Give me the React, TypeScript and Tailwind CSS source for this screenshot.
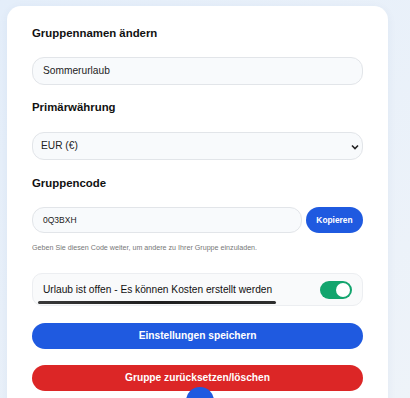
import React from "react";

const font = { fontFamily: '"Liberation Sans", Arial, sans-serif' };

export default function App() {
  return (
    <div
      className="relative h-[398px] w-[410px] overflow-hidden bg-gradient-to-br from-[#e4eefa] to-[#eef3f9] pl-[7px] pr-[22px] pt-[6px]"
      style={font}
    >
      <div className="rounded-[14px] bg-white px-[25px] pb-6 pt-[19px] shadow-[0_2px_10px_rgba(30,60,120,0.06)]">
        {/* Gruppenname */}
        <h2 className="text-[11.4px] font-bold leading-[16px] text-[#111]">Gruppennamen ändern</h2>
        <div className="mt-[16px] flex h-[28px] items-center rounded-[12px] border border-[#e2e5e9] bg-[#f8fafc] px-[10px] text-[10.2px] text-[#222]">
          Sommerurlaub
        </div>

        {/* Währung */}
        <h2 className="mt-[14px] text-[11.4px] font-bold leading-[16px] text-[#111]">Primärwährung</h2>
        <div className="mt-[17px] flex h-[28px] items-center justify-between rounded-[12px] border border-[#e2e5e9] bg-[#f8fafc] pl-[8px] pr-[3px] text-[10.2px] text-[#222]">
          <span>EUR (€)</span>
          <svg width="8" height="6" viewBox="0 0 8 6" className="mt-[1px]">
            <path d="M1 1.5 L4 4.5 L7 1.5" fill="none" stroke="#222" strokeWidth="1.6" />
          </svg>
        </div>

        {/* Gruppencode */}
        <h2 className="mt-[15px] text-[11.4px] font-bold leading-[16px] text-[#111]">Gruppencode</h2>
        <div className="mt-[16px] flex h-[26px] gap-[4px]">
          <div className="flex flex-1 items-center rounded-[12px] border border-[#e2e5e9] bg-[#f8fafc] px-[10px] text-[8.5px] text-[#222]">
            0Q3BXH
          </div>
          <button className="h-[26px] w-[57px] rounded-full bg-[#1f5ae0] text-[8.4px] font-bold text-white">
            Kopieren
          </button>
        </div>
        <p className="mt-[10px] text-[7.15px] leading-[10px] text-[#777]">
          Geben Sie diesen Code weiter, um andere zu Ihrer Gruppe einzuladen.
        </p>

        {/* Status */}
        <div className="relative mt-[20px] flex h-[33px] items-center justify-between rounded-[10px] border border-[#eceef1] bg-[#f9fafb] pl-[10px] pr-[10px]">
          <span className="text-[10.2px] text-[#111]">Urlaub ist offen - Es können Kosten erstellt werden</span>
          <div className="flex h-[18px] w-[32px] items-center justify-end rounded-full bg-[#13a56e] pr-[2px]">
            <div className="h-[14px] w-[14px] rounded-full bg-white" />
          </div>
          <div className="absolute bottom-[1px] left-[5px] h-[3px] w-[238px] rounded-full bg-gradient-to-r from-[#3a3a3a] via-[#1e1e1e] to-[#2e2e2e]" />
        </div>

        <button className="mt-[17px] h-[26px] w-full rounded-full bg-[#1f5ae0] text-[10.2px] font-bold text-white">
          Einstellungen speichern
        </button>
        <button className="mt-[16px] h-[26px] w-full rounded-full bg-[#dc2626] text-[10.2px] font-bold text-white">
          Gruppe zurücksetzen/löschen
        </button>
      </div>

      {/* Floating action button */}
      <div className="absolute left-[186px] top-[387px] h-[28px] w-[28px] rounded-full bg-[#1f5ae0]" />
    </div>
  );
}
